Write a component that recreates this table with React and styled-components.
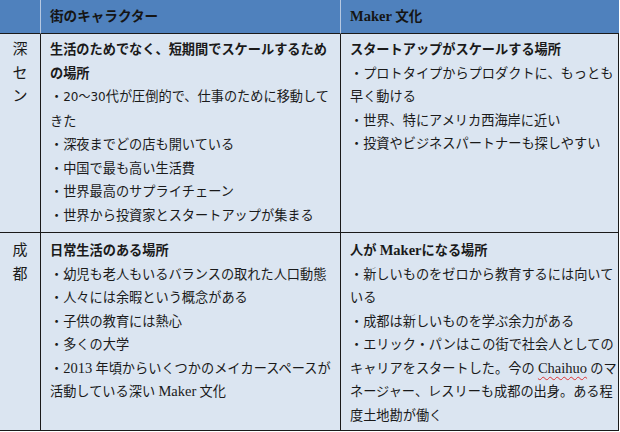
import React from 'react';
import styled, { createGlobalStyle } from 'styled-components';

const GlobalStyle = createGlobalStyle`
  html, body {
    margin: 0;
    padding: 0;
    background: #ffffff;
  }
  body {
    font-family: "Liberation Serif", "Noto Sans CJK JP", serif;
    color: #1a1a1a;
  }
`;

const Table = styled.div`
  display: grid;
  grid-template-columns: 40px 300px 279px;
  width: 619px;
  background: #dbe5f1;
  font-size: 13.2px;
  line-height: 23.5px;
`;

const HeadCell = styled.div`
  box-sizing: border-box;
  height: 34px;
  background: #4f81bd;
  border-bottom: 1px solid #1a1a1a;
  border-left: ${(p) => (p.$first ? 'none' : '1px solid #b7c9e2')};
  padding: 5px 9px 0 9px;
  font-weight: bold;
  font-size: 13.6px;
  color: #151515;
`;

const Cell = styled.div`
  box-sizing: border-box;
  height: ${(p) => p.$h}px;
  border-bottom: 1px solid #1a1a1a;
  border-right: ${(p) => (p.$last ? '1px solid #1a1a1a' : 'none')};
  border-left: ${(p) => (p.$first ? 'none' : '1px solid #1a1a1a')};
  padding: ${(p) => p.$top}px 6px 0 9px;
  overflow: hidden;
`;

const CityCell = styled(Cell)`
  padding: ${(p) => p.$top}px 0 0 0;
  text-align: center;
  font-size: 15px;
`;

const Line = styled.div`
  white-space: nowrap;
  font-weight: ${(p) => (p.$bold ? 'bold' : 'normal')};
`;

const Latin = styled.span`
  font-family: "Liberation Serif", serif;
  font-size: 14.5px;
`;

const Sans = styled.span`
  font-family: "DejaVu Sans", "Noto Sans CJK JP", sans-serif;
  font-size: 12px;
`;

const Misspelt = styled(Latin)`
  text-decoration: underline wavy #d33;
  text-underline-offset: 3px;
  text-decoration-thickness: 1px;
`;

const rows = [
  {
    city: ['深', 'セ', 'ン'],
    h: 199,
    top: 4,
    left: [
      { b: true, t: '生活のためでなく、短期間でスケールするため' },
      { b: true, t: 'の場所' },
      { t: <>・<Sans>20～30</Sans>代が圧倒的で、仕事のために移動して</> },
      { t: 'きた' },
      { t: '・深夜までどの店も開いている' },
      { t: '・中国で最も高い生活費' },
      { t: '・世界最高のサプライチェーン' },
      { t: '・世界から投資家とスタートアップが集まる' },
    ],
    right: [
      { b: true, t: 'スタートアップがスケールする場所' },
      { t: '・プロトタイプからプロダクトに、もっとも' },
      { t: '早く動ける' },
      { t: '・世界、特にアメリカ西海岸に近い' },
      { t: '・投資やビジネスパートナーも探しやすい' },
    ],
  },
  {
    city: ['成', '都'],
    h: 198,
    top: 6,
    left: [
      { b: true, t: '日常生活のある場所' },
      { t: '・幼児も老人もいるバランスの取れた人口動態' },
      { t: '・人々には余暇という概念がある' },
      { t: '・子供の教育には熱心' },
      { t: '・多くの大学' },
      { t: <>・<Latin>2013</Latin> 年頃からいくつかのメイカースペースが</> },
      { t: <>活動している深い <Latin>Maker</Latin> 文化</> },
    ],
    right: [
      { b: true, t: <>人が <Latin>Maker</Latin>になる場所</> },
      { t: '・新しいものをゼロから教育するには向いて' },
      { t: 'いる' },
      { t: '・成都は新しいものを学ぶ余力がある' },
      { t: '・エリック・パンはこの街で社会人としての' },
      { t: <>キャリアをスタートした。今の <Misspelt>Chaihuo</Misspelt> のマ</> },
      { t: 'ネージャー、レスリーも成都の出身。ある程' },
      { t: '度土地勘が働く' },
    ],
  },
];

function Lines({ items }) {
  return items.map((l, i) => (
    <Line key={i} $bold={l.b}>
      {l.t}
    </Line>
  ));
}

export default function App() {
  return (
    <>
      <GlobalStyle />
      <Table>
        <HeadCell $first />
        <HeadCell>街のキャラクター</HeadCell>
        <HeadCell>
          <Latin>Maker</Latin> 文化
        </HeadCell>
        {rows.map((r, i) => (
          <React.Fragment key={i}>
            <CityCell $first $h={r.h} $top={r.top}>
              {r.city.map((c) => (
                <div key={c}>{c}</div>
              ))}
            </CityCell>
            <Cell $h={r.h} $top={r.top}>
              <Lines items={r.left} />
            </Cell>
            <Cell $last $h={r.h} $top={r.top}>
              <Lines items={r.right} />
            </Cell>
          </React.Fragment>
        ))}
      </Table>
    </>
  );
}
